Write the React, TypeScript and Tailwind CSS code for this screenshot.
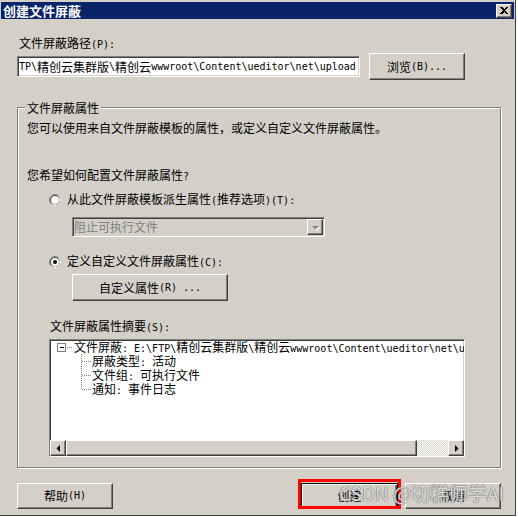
import type { ReactNode } from 'react'

const raised =
  'border border-t-white border-l-white border-r-[#404040] border-b-[#404040] shadow-[inset_-1px_-1px_0_#808080] bg-[#d4d0c8]'
const sunken =
  'border border-t-[#808080] border-l-[#808080] border-r-white border-b-white shadow-[inset_1px_1px_0_#404040,inset_-1px_-1px_0_#d4d0c8]'

// SimSun draws ASCII at half width, so latin runs go in a 10px mono face (6px per char)
function T({ s }: { s: string }) {
  const parts = s.match(/[\x00-\x7f]+|[^\x00-\x7f]+/g) ?? []
  return (
    <>
      {parts.map((p, i) =>
        /^[\x00-\x7f]/.test(p) ? (
          <span key={i} className="font-['DejaVu_Sans_Mono',monospace] text-[10px] whitespace-pre">
            {p}
          </span>
        ) : (
          <span key={i}>{p}</span>
        ),
      )}
    </>
  )
}

function Button({ w, h = 26, children, def }: { w: number; h?: number; children: ReactNode; def?: boolean }) {
  const cls = def
    ? 'border border-black shadow-[inset_1px_1px_0_#fff,inset_-1px_-1px_0_#404040,inset_-2px_-2px_0_#808080] bg-[#d4d0c8]'
    : raised
  return (
    <div
      className={`${cls} flex items-center justify-center leading-[14px] shrink-0`}
      style={{ width: w, height: h }}
    >
      {children}
    </div>
  )
}

function Radio({ checked }: { checked?: boolean }) {
  return (
    <svg width="12" height="12" viewBox="0 0 12 12" className="shrink-0">
      <circle cx="6" cy="6" r="5.5" fill="none" stroke="#808080" />
      <path d="M9.89 2.11 A5.5 5.5 0 0 1 2.11 9.89" fill="none" stroke="#fff" />
      <circle cx="6" cy="6" r="4.5" fill="#fff" stroke="#404040" />
      <path d="M9.18 2.82 A4.5 4.5 0 0 1 2.82 9.18" fill="none" stroke="#d4d0c8" />
      {checked && <circle cx="6" cy="6" r="2" fill="#000" />}
    </svg>
  )
}

function Arrow({ dir, color = '#000' }: { dir: 'left' | 'right' | 'down'; color?: string }) {
  const d =
    dir === 'left' ? 'M5 4 L5 11 L1.5 7.5 Z' : dir === 'right' ? 'M2 4 L2 11 L5.5 7.5 Z' : 'M1 2 L8 2 L4.5 5.5 Z'
  if (dir === 'down')
    return (
      <svg width="9" height="7" viewBox="0 0 9 7">
        <path d="M2 3 L9 3 L5.5 6.5 Z" fill="#fff" />
        <path d={d} fill={color} />
      </svg>
    )
  return (
    <svg width="7" height="14" viewBox="0 0 7 14">
      <path d={d} fill={color} />
    </svg>
  )
}

function ChildRow({ text, last }: { text: string; last?: boolean }) {
  return (
    <div className="flex h-[14px] leading-[14px]">
      <svg width="42" height="14" viewBox="0 0 42 14" className="shrink-0" shapeRendering="crispEdges">
        <path d={last ? 'M31.5 0 L31.5 7.5' : 'M31.5 0 L31.5 14'} stroke="#808080" strokeDasharray="1 1" />
        <path d="M32 7.5 L41 7.5" stroke="#808080" strokeDasharray="1 1" />
      </svg>
      <span className="whitespace-nowrap">
        <T s={text} />
      </span>
    </div>
  )
}

export default function App() {
  return (
    <div className="w-[518px] h-[517px] bg-white font-['Noto_Sans_CJK_SC',sans-serif] text-[12px] text-black">
      <div className="relative w-[516px] h-[516px] bg-[#d4d0c8] border-r border-b border-[#404040] pt-[2px]">
        {/* title bar */}
        <div className="mx-[1px] h-[17px] bg-[#0a246a] flex items-center justify-between pl-[2px] pr-[2px]">
          <span className="text-white font-bold text-[13px] leading-[14px]">创建文件屏蔽</span>
          <div className={`${raised} w-[16px] h-[14px] flex items-center justify-center`}>
            <svg width="8" height="7" viewBox="0 0 8 7" shapeRendering="crispEdges">
              <path d="M0 0h2l2 2l2-2h2l-3 3.5l3 3.5h-2l-2-2l-2 2h-2l3-3.5z" fill="#000" />
            </svg>
          </div>
        </div>

        <div className="pl-[17px]">
          <div className="mt-[17px] h-[14px] leading-[14px] pl-[2px]">
            <T s="文件屏蔽路径(P):" />
          </div>
          <div className="mt-[3px] flex items-center h-[27px]">
            <div className={`${sunken} bg-white w-[343px] h-[21px] flex items-center pl-[1px] overflow-hidden whitespace-nowrap leading-[14px]`}>
              <T s="TP\精创云集群版\精创云wwwroot\Content\ueditor\net\upload" />
            </div>
            <div className="ml-[9px]">
              <Button w={96} h={27}>
                <T s="浏览(B)..." />
              </Button>
            </div>
          </div>

          {/* group box */}
          <div className="relative mt-[27px] w-[484px] h-[361px] border border-[#808080] shadow-[inset_1px_1px_0_#fff,1px_1px_0_#fff] pl-[9px] pt-[13px]">
            <span className="absolute left-[7px] -top-[7px] px-[2px] bg-[#d4d0c8] leading-[14px]">文件屏蔽属性</span>
            <div className="h-[14px] leading-[14px]">您可以使用来自文件屏蔽模板的属性，或定义自定义文件屏蔽属性。</div>
            <div className="mt-[33px] h-[14px] leading-[14px]">
              <T s="您希望如何配置文件屏蔽属性?" />
            </div>

            <div className="mt-[11px] ml-[22px] flex items-center gap-[6px] h-[14px] leading-[14px]">
              <Radio />
              <span>
                <T s="从此文件屏蔽模板派生属性(推荐选项)(T):" />
              </span>
            </div>
            <div className={`${sunken} mt-[10px] ml-[45px] w-[253px] h-[20px] flex items-center justify-between pl-[1px] pr-[1px]`}>
              <span className="text-[#808080] leading-[14px]">阻止可执行文件</span>
              <div className={`${raised} w-[16px] h-[16px] flex items-center justify-center`}>
                <Arrow dir="down" color="#808080" />
              </div>
            </div>

            <div className="mt-[18px] ml-[22px] flex items-center gap-[6px] h-[14px] leading-[14px]">
              <Radio checked />
              <span>
                <T s="定义自定义文件屏蔽属性(C):" />
              </span>
            </div>
            <div className="mt-[5px] ml-[45px]">
              <Button w={156} h={27}>
                <T s="自定义属性(R) ..." />
              </Button>
            </div>

            <div className="mt-[18px] ml-[23px] h-[14px] leading-[14px]">
              <T s="文件屏蔽属性摘要(S):" />
            </div>
            <div className={`${sunken} mt-[6px] ml-[22px] w-[416px] h-[118px] bg-white flex flex-col`}>
              <div className="flex-1 overflow-hidden">
                <div className="flex h-[14px] leading-[14px]">
                  <svg width="24" height="14" viewBox="0 0 24 14" className="shrink-0" shapeRendering="crispEdges">
                    <rect x="7.5" y="3.5" width="8" height="8" fill="#fff" stroke="#808080" />
                    <path d="M9.5 7.5 L14 7.5" stroke="#000" />
                    <path d="M17 7.5 L23 7.5" stroke="#808080" strokeDasharray="1 1" />
                  </svg>
                  <span className="whitespace-nowrap">
                    <T s="文件屏蔽: E:\FTP\精创云集群版\精创云wwwroot\Content\ueditor\net\upload" />
                  </span>
                </div>
                <ChildRow text="屏蔽类型: 活动" />
                <ChildRow text="文件组: 可执行文件" />
                <ChildRow text="通知: 事件日志" last />
              </div>
              {/* horizontal scrollbar */}
              <div className="flex h-[16px] shrink-0">
                <div className={`${raised} w-[16px] h-[16px] flex items-center justify-center`}>
                  <Arrow dir="left" />
                </div>
                <div className={`${raised} w-[351px] h-[16px]`} />
                <div className="flex-1 bg-[image:repeating-conic-gradient(#fff_0_25%,#d4d0c8_0_50%)] bg-[length:2px_2px]" />
                <div className={`${raised} w-[16px] h-[16px] flex items-center justify-center`}>
                  <Arrow dir="right" />
                </div>
              </div>
            </div>
          </div>

          {/* bottom buttons */}
          <div className="mt-[15px] flex">
            <Button w={96}>
              <T s="帮助(H)" />
            </Button>
            <div className="ml-[188px]">
              <Button w={97} def>
                创建
              </Button>
            </div>
            <div className="ml-[7px]">
              <Button w={96}>取消</Button>
            </div>
          </div>
        </div>

        {/* annotation + watermark laid over the screenshot */}
        <div className="absolute left-[298px] top-[479px] w-[103px] h-[30px] border-[3px] border-[#ff0000]" />
        <div className="absolute left-[339px] top-[481px] text-[19px] leading-[24px] whitespace-nowrap text-[rgba(255,255,255,0.8)] font-['Noto_Sans_CJK_SC',sans-serif] [text-shadow:0_0_1px_#555,0_0_1px_#555]">
          CSDN @切糕师学AI
        </div>
      </div>
    </div>
  )
}
